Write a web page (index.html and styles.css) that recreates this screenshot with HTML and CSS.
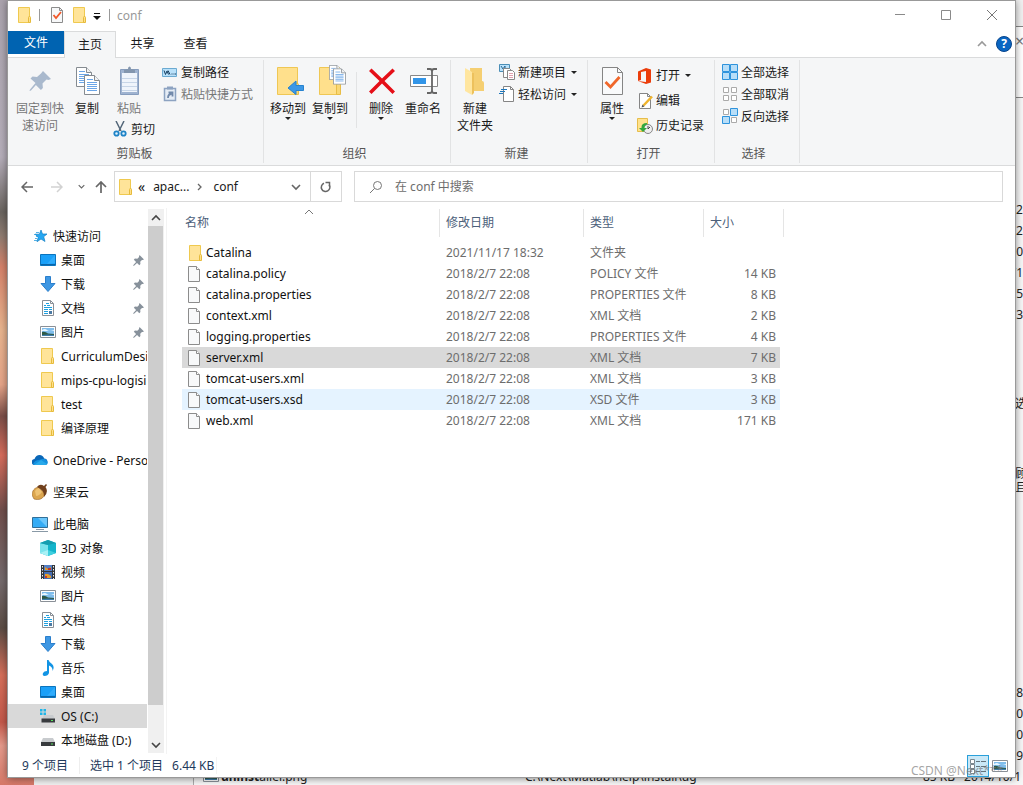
FILE: index.html
```html
<!DOCTYPE html>
<html lang="zh-CN">
<head>
<meta charset="utf-8">
<title>conf</title>
<link rel="stylesheet" href="styles.css">
</head>
<body>
<svg class="sprite" aria-hidden="true">
  <symbol id="folder" viewBox="0 0 16 16"><path d="M1.500.500h11v15h-11z" fill="#ffe499" stroke="#efc94f"/><path d="M11.500 10.500q0-1 1-1t1 1v5h-2z" fill="#ffe08a" stroke="#e6bb3c"/></symbol>
  <symbol id="file" viewBox="0 0 16 16"><path d="M.5.500h8l3 3v12H.5z" fill="#f8f9fa" stroke="#8c8c8c"/><path d="M8.500.500v3h3" fill="#fff" stroke="#8c8c8c"/></symbol>
  <symbol id="check-doc" viewBox="0 0 16 16"><path d="M2.500.500h8l3 3v12h-11z" fill="#f7f8f9" stroke="#8c8c8c"/><path d="M10.500.500v3h3" fill="none" stroke="#8c8c8c"/><path d="M4.500 8l2.500 3 5-6" fill="none" stroke="#f1592a" stroke-width="1.800"/></symbol>
  <symbol id="down" viewBox="0 0 6 3"><path d="M0 0h6L3 3z" fill="currentColor"/></symbol>
  <symbol id="chev-down" viewBox="0 0 10 10"><path d="M1 3l4 4 4-4" fill="none" stroke="currentColor" stroke-width="1.600"/></symbol>
  <symbol id="chev-up" viewBox="0 0 10 10"><path d="M1 7l4-4 4 4" fill="none" stroke="currentColor" stroke-width="1.600"/></symbol>
  <symbol id="pin" viewBox="0 0 16 16"><path d="M9.500 0L16 6.500l-2 .8-1-.1-2.500 2.500.3 3.500-1.600 1.600-3.300-3.300L1.500 15.500l-1.300.300.3-1.300 4-4.400L1.200 6.800l1.600-1.600 3.500.3L8.800 3l-.1-1z" fill="currentColor"/></symbol>
  <symbol id="desktop" viewBox="0 0 16 16"><path d="M.5 2.500h15v11H.5z" fill="#1aa0f8" stroke="#0b74bd"/><path d="M15 3v8L7 12z" fill="#3fb4ff" opacity=".6"/><path d="M1 12.500h14" stroke="#0a65a8"/></symbol>
  <symbol id="download" viewBox="0 0 16 16"><path d="M5.500.500h5v7H15L8 15.500 1 7.500h4.500z" fill="#3e97e3" stroke="#2b7fcc"/></symbol>
  <symbol id="document" viewBox="0 0 16 16"><path d="M2.500.500h8l3 3v12h-11z" fill="#fff" stroke="#8a9097"/><path d="M10.500.500v3h3" fill="none" stroke="#8a9097"/><path d="M6 3.500h3M4 5.500h2M7 5.500h3M4 7.500h8M4 9.500h4M4 11.500h4M9 9.500h3M4 13.500h4" fill="none" stroke="#1ea0e0"/><path d="M9 11h3v3H9z" fill="#4b7aa3"/></symbol>
  <symbol id="picture" viewBox="0 0 16 16"><path d="M.5 2.500h15v11H.5z" fill="#fff" stroke="#8a9097"/><path d="M2 4h12v8H2z" fill="#7fbdec"/><path d="M2 6q3-2 5 0t7 0v1H2z" fill="#e8f6ff"/><path d="M2 8q3-1 6 1.500l6 .5v2H2z" fill="#2e5945"/><path d="M2 11q6-1 12 0v1H2z" fill="#3e7cab"/></symbol>
  <symbol id="star" viewBox="0 0 16 16"><path d="M9 2l1.500 4H15l-3.300 2.700 1.300 4.800L9 11l-4 2.700 1.200-4.500L3 6.200h4.400z" fill="#25a7f2" stroke="#147fc4" stroke-width=".7"/><path d="M4 4.500h3M2 6.500h3M4 8.500h2M3 10.500h2M2 12.500h3" stroke="#299de0" stroke-width=".8"/></symbol>
  <symbol id="cloud" viewBox="0 0 16 16"><path d="M3 13a3 3 0 0 1-.5-6Q4 3 7.500 3q3.500 0 4.700 3.500A3.300 3.300 0 0 1 13 13z" fill="#0a67b8"/><path d="M1 12q2-4 6-4l3-1q4-.8 5 2 2 3-1.500 4H3q-1.400 0-2-1z" fill="#1490df"/><path d="M2 13l7-5 6 4q-.5 1-2 1z" fill="#29a9ea"/></symbol>
  <symbol id="nut" viewBox="0 0 16 16"><path d="M6 3q-6 2-6 8l2 4q7 2 10-3l1-3z" fill="#dba54e" stroke="#9a6528" stroke-width=".6"/><path d="M3 7q1-2 4-3l3 4q-3 4-6 4z" fill="#f6ce83" opacity=".7"/><path d="M5 3q3-4 7-1l2-2 1 1-1.500 2Q17 8 12 13q.5-7-7-10z" fill="#71401c"/></symbol>
  <symbol id="pc" viewBox="0 0 16 16"><path d="M.5 1.500h15v10H.5z" fill="#35acf5" stroke="#316f98"/><path d="M15 2v9L6 2z" fill="#8bd5ff" opacity=".65"/><path d="M4 13.500h8M0 15.500h16" stroke="#8999a6"/></symbol>
  <symbol id="cube" viewBox="0 0 16 16"><path d="M8 0l8 3v10l-8 3-8-3V3z" fill="#14b4cb"/><path d="M0 3l8 2v11l-8-3z" fill="#7be3ec"/><path d="M0 3l8-3 8 3-8 2z" fill="#159daf"/><path d="M0 13l8-3v6z" fill="#a9f1f5"/><path d="M16 13l-8-3v6z" fill="#3fd0df"/></symbol>
  <symbol id="video" viewBox="0 0 16 16"><path d="M1 1h14v14H1z" fill="#33363a"/><path d="M4 1h8v6H4z" fill="#547ec4"/><path d="M4 8h8v7H4z" fill="#456fb5"/><path d="M5 3l3 2 3-2v3H5zM5 10h3l3 2v2H5z" fill="#e49b2a"/><path d="M8 4h3v2H8zM5 12h2v2H5z" fill="#c63826"/><path d="M2.500 2v13M13.500 2v13" stroke="#eee" stroke-dasharray="1.500 1.500"/></symbol>
  <symbol id="music" viewBox="0 0 16 16"><path d="M7 0h1.500q.5 2 3.500 4 3 3 .500 7 .5-4-3.500-5.500V13q-1 3-4.500 3Q2 15.500 3 13q1-2 4-2z" fill="#1294e4"/></symbol>
  <symbol id="disk" viewBox="0 0 16 16"><path d="M3 6h10l2 4H1z" fill="#c8cbce"/><path d="M1 10h14v4H1z" fill="#383b3e"/><path d="M11 12h2" stroke="#57e35f"/></symbol>
  <symbol id="osdisk" viewBox="0 0 16 16"><path d="M0 1h2.500v2.500H0zM3.500 1H6v2.500H3.500zM0 4.500h2.500V7H0zM3.500 4.500H6V7H3.500z" fill="#20b5e8"/><path d="M4 7h9l2 4H2z" fill="#c8cbce"/><path d="M1.500 10.500H15v4H1.500z" fill="#383b3e"/><path d="M11 12.500h2" stroke="#57e35f"/></symbol>
  <symbol id="big-folder" viewBox="0 0 32 32"><path d="M5.500 2.500h20v27h-20z" fill="#ffe08c" stroke="#efc754"/><path d="M22.500 20q0-2 2-2t2 2v9.500h-4z" fill="#f9d774" stroke="#e8bd46"/></symbol>
  <symbol id="sheet" viewBox="0 0 16 20"><path d="M.5.500h10l5 5v14H.5z" fill="#fff" stroke="#858b91"/><path d="M10.500.500v5h5" fill="#f1f2f3" stroke="#858b91"/><path d="M3 4.500h6M3 7.500h10M3 9.500h10M3 11.500h10M3 13.500h10M3 15.500h10" stroke="#6ba6e8"/></symbol>
</svg>

<div class="behind" aria-hidden="true">
  <div class="wallpaper"></div>
  <div class="back-window">
    <div class="back-edge edge-top"><span class="back-x">×</span></div>
    <div class="back-dates upper"><span>7 2</span><span>7 2</span><span>30</span><span>/1</span><span>25</span><span>23</span><span>:4</span></div>
    <div class="back-notes"><span>选</span><span class="note-gap">顾利</span><span>且值</span></div>
    <div class="back-dates lower"><span>8</span><span>00</span><span>00</span><span>29</span></div>
    <div class="back-file"><svg class="i16"><use href="#picture"/></svg><span><b>uninst</b>aller.png</span></div>
    <div class="back-path">C:\Next\Matlab\help\install\ug</div>
    <div class="back-size"><span>85 KB</span><span>2014/10/1</span></div>
  </div>
</div>

<main class="window">
  <header class="titlebar">
    <svg class="i16"><use href="#folder"/></svg>
    <i class="tick"></i>
    <button class="quick" aria-label="属性"><svg class="i16"><use href="#check-doc"/></svg></button>
    <button class="quick" aria-label="新建文件夹"><svg class="i16"><use href="#folder"/></svg></button>
    <button class="customize" aria-label="自定义快速访问工具栏"><svg viewBox="0 0 8 8" width="8" height="8"><path d="M1 1.500h6" stroke="#111"/><path d="M0 4h8L4 8z" fill="#111"/></svg></button>
    <i class="tick"></i>
    <h1 class="title">conf</h1>
    <div class="controls">
      <button aria-label="最小化"><svg viewBox="0 0 10 10" width="10" height="10"><path d="M0 4.500h10" stroke="#8a8a8a"/></svg></button>
      <button aria-label="最大化"><svg viewBox="0 0 10 10" width="10" height="10"><path d="M.5.500h9v9h-9z" fill="none" stroke="#8a8a8a"/></svg></button>
      <button aria-label="关闭"><svg viewBox="0 0 10 10" width="10" height="10"><path d="M0 0l10 10M10 0L0 10" stroke="#777"/></svg></button>
    </div>
  </header>

  <nav class="tabs">
    <button class="tab file-tab">文件</button>
    <button class="tab active">主页</button>
    <button class="tab">共享</button>
    <button class="tab">查看</button>
    <div class="tabs-end">
      <button aria-label="最小化功能区" class="collapse"><svg class="i10"><use href="#chev-up"/></svg></button>
      <button aria-label="帮助" class="help">?</button>
    </div>
  </nav>

  <section class="ribbon">
    <div class="group clipboard">
      <div class="group-body">
        <button class="big wide dim"><svg class="i32" viewBox="0 0 32 32"><path d="M19 6l8 8-2.500 1-2-.4-4 4 .4 4.400-2 2-5-5L7 25.500l-1.500.500.500-1.500 5.500-6.500-5-4.500 2-2 4.500.500 4-3.500z" fill="#a9b9cd"/></svg><span>固定到快<br>速访问</span></button>
        <button class="big narrow"><svg class="i32" viewBox="0 0 32 32"><svg x="5" y="2" width="16" height="20"><use href="#sheet"/></svg><svg x="13" y="10" width="16" height="20"><use href="#sheet"/></svg></svg><span>复制</span></button>
        <div class="paste-col">
          <button class="big paste dim"><svg class="i32" viewBox="0 0 32 32"><path d="M7.500 4.500h18v25h-18z" fill="#9fb3d0" stroke="#869cbd"/><path d="M9 8h15v19H9z" fill="#eff4fb"/><path d="M9 13.500h15M9 17.500h15M9 21.500h15M9 25.500h15" stroke="#c7d5e7"/><path d="M11 8V5l4-1q0-2.500 1.500-2.500T18 4l4 1v3z" fill="#8396ae"/></svg><span>粘贴</span></button>
          <button class="small cut"><svg class="i16" viewBox="0 0 16 16"><path d="M4 0l5 10M12 0L7 10" stroke="#536779" stroke-width="1.500"/><circle cx="4.500" cy="12.500" r="2.200" fill="#dff2ff" stroke="#1e83c6" stroke-width="1.800"/><circle cx="11.500" cy="12.500" r="2.200" fill="#dff2ff" stroke="#1e83c6" stroke-width="1.800"/></svg>剪切</button>
        </div>
        <div class="stack">
          <button class="small"><svg class="i16" viewBox="0 0 16 16"><path d="M.5 4.500h14v8H.5z" fill="#b9e1fa" stroke="#6baad1"/><path d="M2 6.500l1.500 4L5 7l1.500 3.500M6 6.500l2 4M9.500 10h1M11.500 10h1M13 10h1" fill="none" stroke="#153e60"/></svg>复制路径</button>
          <button class="small dim"><svg class="i16" viewBox="0 0 16 16"><path d="M2.500 2.500h11v12h-11z" fill="#e5ecf5" stroke="#8da3c1" stroke-width="1.500"/><path d="M5 .5h6v3H5z" fill="#8da3c1"/><path d="M6 12q0-4 3.500-4M6.500 6.500h4v4" fill="none" stroke="#7189aa" stroke-width="1.800"/></svg>粘贴快捷方式</button>
        </div>
      </div>
      <div class="group-label">剪贴板</div>
    </div>

    <div class="group organize">
      <div class="group-body">
        <button class="big"><svg class="i32" viewBox="0 0 32 32"><use href="#big-folder"/><path d="M31.500 20.500v5H24v4l-8-6.500 8-7v4.500z" fill="#3d98e6" stroke="#2783cf"/></svg><span>移动到</span><svg class="drop"><use href="#down"/></svg></button>
        <button class="big"><svg class="i32" viewBox="0 0 32 32"><use href="#big-folder"/><svg x="15" y="0" width="12" height="15" viewBox="0 0 16 20"><use href="#sheet"/></svg><svg x="19" y="3" width="13" height="17" viewBox="0 0 16 20"><use href="#sheet"/></svg></svg><span>复制到</span><svg class="drop"><use href="#down"/></svg></button>
        <i class="inner-rule"></i>
        <button class="big"><svg class="i32" viewBox="0 0 32 32"><path d="M6.500 3.500L17 13.500 27.500 3.500 30 6 19.500 16 30 26.500 27.500 29 17 18.500 6.500 29 4 26.500 14.500 16 4 6z" fill="#e50f18"/></svg><span>删除</span><svg class="drop"><use href="#down"/></svg></button>
        <button class="big"><svg class="i32" viewBox="0 0 32 32"><path d="M3.500 10.500h27v11h-27z" fill="#fff" stroke="#888"/><path d="M6 13h13v6H6z" fill="#3295e8"/><path d="M20 4h3q2 0 2 2.500v19q0 2.500-2 2.500h-3M30 4h-3q-2 0-2 2.500v19q0 2.500 2 2.500h3" fill="none" stroke="#666" stroke-width="1.800"/></svg><span>重命名</span></button>
      </div>
      <div class="group-label">组织</div>
    </div>

    <div class="group create">
      <div class="group-body">
        <button class="big"><svg class="i32" viewBox="0 0 32 32"><path d="M11 3h12v13q2 0 2 2v8H12z" fill="#f5cf72"/><path d="M6 3l7 4v23l-7-4z" fill="#ffe6a0"/><path d="M13 8h2v20l-2 2z" fill="#edc15c"/></svg><span>新建<br>文件夹</span></button>
        <div class="stack">
          <button class="small"><svg class="i16" viewBox="0 0 16 16"><path d="M.5.500h10v7H.5z" fill="#b9e1fa" stroke="#4a8eb7"/><path d="M2 2l2 3 2-3v3" fill="none" stroke="#286895"/><path d="M4.500 4.500h6l2 2v7h-8z" fill="#fff" stroke="#888"/><path d="M8.500 6.500h5l2 2v7h-7z" fill="#fff" stroke="#888"/><path d="M10 9.500h4M10 11.500h4M10 13.500h4" stroke="#e0a0ae"/></svg>新建项目<svg class="drop"><use href="#down"/></svg></button>
          <button class="small"><svg class="i16" viewBox="0 0 16 16"><path d="M4.500.500h7l3 3v12h-10z" fill="#fff" stroke="#858585"/><path d="M11.500.500v3h3" fill="none" stroke="#858585"/><path d="M2 3.500h6M1 5.500h5M0 7.500h4" stroke="#1e78bd"/></svg>轻松访问<svg class="drop"><use href="#down"/></svg></button>
        </div>
      </div>
      <div class="group-label">新建</div>
    </div>

    <div class="group open">
      <div class="group-body">
        <button class="big"><svg class="i32" viewBox="0 0 32 32"><path d="M6.500 2.500h15l5 5v22h-20z" fill="#f9fafb" stroke="#858585"/><path d="M21.500 2.500v5h5" fill="none" stroke="#858585"/><path d="M9.500 17l5 5 9-10" fill="none" stroke="#f0672b" stroke-width="2.800"/></svg><span>属性</span><svg class="drop"><use href="#down"/></svg></button>
        <div class="stack tall">
          <button class="small"><svg class="i16" viewBox="0 0 16 16"><path d="M1 3.500L9 0l5 1.500v13L9 16l-8-3 8 1V3L4 4v8l-3 1z" fill="#eb3d0b"/></svg>打开<svg class="drop"><use href="#down"/></svg></button>
          <button class="small"><svg class="i16" viewBox="0 0 16 16"><path d="M2.500.500h8l3 3v12h-11z" fill="#fff" stroke="#858585"/><path d="M10.500.500v3h3" fill="none" stroke="#858585"/><path d="M15 3.500l-8.500 9" stroke="#efb42e" stroke-width="2.500"/><path d="M4.500 14.500l1-3 2 2z" fill="#555"/></svg>编辑</button>
          <button class="small"><svg class="i16" viewBox="0 0 16 16"><path d="M.5.500h10v13H.5z" fill="#ffe28d" stroke="#e6bd4b"/><circle cx="11" cy="11" r="4.500" fill="#eee" stroke="#888"/><path d="M11 8v3l2-2" fill="none" stroke="#444"/><path d="M10 5Q4 5 4.500 10H2l4 4 4-4H7.500Q7 7 10 6.500z" fill="#31a83d"/></svg>历史记录</button>
        </div>
      </div>
      <div class="group-label">打开</div>
    </div>

    <div class="group select">
      <div class="group-body">
        <div class="stack">
          <button class="small"><svg class="i16" viewBox="0 0 16 16"><path d="M.5.500h7v7h-7zM8.500.500h7v7h-7zM.5 8.500h7v7h-7zM8.500 8.500h7v7h-7z" fill="#b8def8" stroke="#2e93dc"/></svg>全部选择</button>
          <button class="small"><svg class="i16" viewBox="0 0 16 16"><path d="M1.500 1.500h5v5h-5zM9.500 1.500h5v5h-5zM1.500 9.500h5v5h-5zM9.500 9.500h5v5h-5z" fill="#fff" stroke="#aaa"/></svg>全部取消</button>
          <button class="small"><svg class="i16" viewBox="0 0 16 16"><path d="M1.500 1.500h5v5h-5zM9.500 9.500h5v5h-5z" fill="#fff" stroke="#aaa"/><path d="M8.500.500h7v7h-7zM.5 8.500h7v7h-7z" fill="#b8def8" stroke="#2e93dc"/></svg>反向选择</button>
        </div>
      </div>
      <div class="group-label">选择</div>
    </div>
  </section>

  <div class="navigation">
    <div class="history">
      <button aria-label="后退"><svg viewBox="0 0 12 12" width="12" height="12"><path d="M12 6H1M6 1L1 6l5 5" fill="none" stroke="#666" stroke-width="1.500"/></svg></button>
      <button aria-label="前进"><svg viewBox="0 0 12 12" width="12" height="12"><path d="M0 6h11M6 1l5 5-5 5" fill="none" stroke="#d2d2d2" stroke-width="1.500"/></svg></button>
      <button aria-label="最近浏览的位置" class="recent"><svg viewBox="0 0 10 10" width="7" height="7"><use href="#chev-down"/></svg></button>
      <button aria-label="上移" class="up"><svg viewBox="0 0 12 12" width="12" height="12"><path d="M6 12V1M1 6l5-5 5 5" fill="none" stroke="#666" stroke-width="1.700"/></svg></button>
    </div>
    <div class="address">
      <svg class="i16"><use href="#folder"/></svg>
      <button class="crumb first">«</button>
      <button class="crumb">apac...</button>
      <svg class="crumb-arrow" viewBox="0 0 6 8"><path d="M1 1l3 3-3 3" fill="none" stroke="#666" stroke-width="1.300"/></svg>
      <button class="crumb">conf</button>
      <button class="address-drop" aria-label="以前的位置"><svg class="i10"><use href="#chev-down"/></svg></button>
      <button class="refresh" aria-label="刷新"><svg viewBox="0 0 12 12" width="12" height="12"><path d="M4 2.200A4.300 4.300 0 1 0 9.200 3.800" fill="none" stroke="#666" stroke-width="1.500"/><path d="M5.500 1.500H9.500v4" fill="none" stroke="#666" stroke-width="1.500"/></svg></button>
    </div>
    <label class="search"><svg viewBox="0 0 14 14" width="14" height="14"><circle cx="8.500" cy="5.500" r="4" fill="none" stroke="#777"/><path d="M5.500 8.500L1 13" stroke="#777"/></svg><input type="text" aria-label="搜索" placeholder="在 conf 中搜索"></label>
  </div>

  <div class="content">
    <nav class="tree" aria-label="导航窗格">
      <ul>
        <li><a href="#" class="root"><svg class="i16"><use href="#star"/></svg>快速访问</a></li>
        <li><a href="#"><svg class="i16"><use href="#desktop"/></svg>桌面<svg class="pinned"><use href="#pin"/></svg></a></li>
        <li><a href="#"><svg class="i16"><use href="#download"/></svg>下载<svg class="pinned"><use href="#pin"/></svg></a></li>
        <li><a href="#"><svg class="i16"><use href="#document"/></svg>文档<svg class="pinned"><use href="#pin"/></svg></a></li>
        <li><a href="#"><svg class="i16"><use href="#picture"/></svg>图片<svg class="pinned"><use href="#pin"/></svg></a></li>
        <li><a href="#"><svg class="i16"><use href="#folder"/></svg>CurriculumDesign</a></li>
        <li><a href="#"><svg class="i16"><use href="#folder"/></svg>mips-cpu-logisim</a></li>
        <li><a href="#"><svg class="i16"><use href="#folder"/></svg>test</a></li>
        <li><a href="#"><svg class="i16"><use href="#folder"/></svg>编译原理</a></li>
        <li class="section"><a href="#" class="root"><svg class="i16"><use href="#cloud"/></svg>OneDrive - Personal</a></li>
        <li class="section"><a href="#" class="root"><svg class="i16"><use href="#nut"/></svg>坚果云</a></li>
        <li class="section"><a href="#" class="root"><svg class="i16"><use href="#pc"/></svg>此电脑</a></li>
        <li><a href="#"><svg class="i16"><use href="#cube"/></svg>3D 对象</a></li>
        <li><a href="#"><svg class="i16"><use href="#video"/></svg>视频</a></li>
        <li><a href="#"><svg class="i16"><use href="#picture"/></svg>图片</a></li>
        <li><a href="#"><svg class="i16"><use href="#document"/></svg>文档</a></li>
        <li><a href="#"><svg class="i16"><use href="#download"/></svg>下载</a></li>
        <li><a href="#"><svg class="i16"><use href="#music"/></svg>音乐</a></li>
        <li><a href="#"><svg class="i16"><use href="#desktop"/></svg>桌面</a></li>
        <li><a href="#" class="current"><svg class="i16"><use href="#osdisk"/></svg>OS (C:)</a></li>
        <li><a href="#"><svg class="i16"><use href="#disk"/></svg>本地磁盘 (D:)</a></li>
      </ul>
      <div class="scrollbar">
        <button aria-label="向上滚动"><svg class="i10"><use href="#chev-up"/></svg></button>
        <div class="track"><div class="thumb"></div></div>
        <button aria-label="向下滚动"><svg class="i10"><use href="#chev-down"/></svg></button>
      </div>
    </nav>

    <div class="files">
      <table>
        <colgroup><col class="c-name"><col class="c-date"><col class="c-type"><col class="c-size"></colgroup>
        <thead><tr>
          <th><button>名称</button><svg class="sort i10" viewBox="0 0 10 10"><path d="M1 7l4-4 4 4" fill="none" stroke="#777"/></svg></th>
          <th><button>修改日期</button></th><th><button>类型</button></th><th><button>大小</button></th>
        </tr></thead>
        <tbody>
          <tr><td><svg class="i16"><use href="#folder"/></svg>Catalina</td><td>2021/11/17 18:32</td><td>文件夹</td><td></td></tr>
          <tr><td><svg class="i16"><use href="#file"/></svg>catalina.policy</td><td>2018/2/7 22:08</td><td>POLICY 文件</td><td>14 KB</td></tr>
          <tr><td><svg class="i16"><use href="#file"/></svg>catalina.properties</td><td>2018/2/7 22:08</td><td>PROPERTIES 文件</td><td>8 KB</td></tr>
          <tr><td><svg class="i16"><use href="#file"/></svg>context.xml</td><td>2018/2/7 22:08</td><td>XML 文档</td><td>2 KB</td></tr>
          <tr><td><svg class="i16"><use href="#file"/></svg>logging.properties</td><td>2018/2/7 22:08</td><td>PROPERTIES 文件</td><td>4 KB</td></tr>
          <tr class="selected"><td><svg class="i16"><use href="#file"/></svg>server.xml</td><td>2018/2/7 22:08</td><td>XML 文档</td><td>7 KB</td></tr>
          <tr><td><svg class="i16"><use href="#file"/></svg>tomcat-users.xml</td><td>2018/2/7 22:08</td><td>XML 文档</td><td>3 KB</td></tr>
          <tr class="hovered"><td><svg class="i16"><use href="#file"/></svg>tomcat-users.xsd</td><td>2018/2/7 22:08</td><td>XSD 文件</td><td>3 KB</td></tr>
          <tr><td><svg class="i16"><use href="#file"/></svg>web.xml</td><td>2018/2/7 22:08</td><td>XML 文档</td><td>171 KB</td></tr>
        </tbody>
      </table>
    </div>
  </div>

  <footer class="status">
    <span class="count">9 个项目</span>
    <span>选中 1 个项目</span>
    <span class="bytes">6.44 KB</span>
    <div class="views">
      <button class="view on" aria-label="详细信息"><svg viewBox="0 0 16 16" width="16" height="16"><path d="M.5 1.500h4v4h-4zM.5 6.500h4v4h-4zM.5 11.500h4v4h-4z" fill="#fff" stroke="#7b878e"/><path d="M6 3.500h4M11 3.500h5M6 8.500h4M11 8.500h5M6 13.500h4M11 13.500h5" stroke="#65747d"/></svg></button>
      <button class="view" aria-label="大图标"><svg class="i16"><use href="#picture"/></svg></button>
    </div>
  </footer>
</main>
<div class="watermark">CSDN @Next***</div>
</body>
</html>
```

FILE: styles.css
```css
* { box-sizing: border-box; }

body {
  margin: 0;
  height: 100vh;
  display: flex;
  position: relative;
  overflow: hidden;
  background: #f0f0f0;
  color: #1a1a1a;
  font: 12px/17px "Noto Sans", "Noto Sans CJK SC", sans-serif;
}

button {
  padding: 0;
  border: 0;
  background: none;
  color: inherit;
  font: inherit;
}

svg { display: block; flex: none; }
.sprite { position: absolute; width: 0; height: 0; }
.i10 { width: 10px; height: 10px; }
.i16 { width: 16px; height: 16px; }
.i32 { width: 32px; height: 32px; }
.drop { width: 6px; height: 3px; color: #222; }

/* Desktop and the window underneath */
.behind { position: absolute; inset: 0; overflow: hidden; color: #222; }
.wallpaper {
  position: absolute;
  inset: 0 auto 0 0;
  width: 34px;
  background: linear-gradient(#aaa3ad 0, #b5aeba 20%, #6b6560 27%, #8e7b70 30%, #d5826a 34%, #e8b48e 42%, #e5a488 49%, #7b4f49 53%, #d66c5c 58%, #704f4c 65%, #746a6c 74%, #5c4d45 80%, #d66f5a 86%, #c4584a 92%, #e69b8c 95%, #d67868 100%);
}
.back-window { position: absolute; inset: 26px 0 0 193px; background: #f7f7f7; border-left: 1px solid #aaa; }
.edge-top {
  position: absolute;
  inset: 0 0 auto auto;
  width: 8px;
  height: 72px;
  background: #fff;
  border-top: 1px solid #888;
  border-bottom: 1px solid #888;
}
.back-x { position: absolute; top: 6px; left: 0; font-size: 16px; color: #777; }
.back-dates { position: absolute; right: 0; display: grid; text-align: right; line-height: 21px; }
.upper { top: 173px; height: 132px; overflow: hidden; }
.lower { top: 656px; }
.back-notes { position: absolute; top: 371px; right: 0; display: grid; width: 8px; overflow: hidden; line-height: 14px; white-space: nowrap; }
.note-gap { margin-top: 56px; }
.back-file { position: absolute; left: 9px; bottom: 0; display: flex; gap: 2px; }
.back-path { position: absolute; left: 331px; bottom: 0; }
.back-size { position: absolute; right: 2px; bottom: 0; display: flex; gap: 9px; }

/* Explorer window */
.window {
  position: relative;
  flex: 1;
  min-width: 0;
  margin: 0 8px 8px;
  display: flex;
  flex-direction: column;
  background: #fff;
  border-top: 1px solid #999;
  box-shadow: 0 0 0 1px #999, 0 1px 8px #0008;
}

.titlebar { display: flex; align-items: center; height: 30px; padding: 0 0 2px 9px; }
.tick { width: 1px; height: 12px; margin-left: 6px; background: #999; }
.titlebar .quick { margin-left: 9px; }
.quick + .quick { margin-left: 7px; }
.titlebar .customize { margin-left: 5px; padding-top: 2px; }
.customize + .tick { margin-left: 8px; }
.title { margin: 0 0 0 7px; font-size: 12px; font-weight: 400; color: #999; }
.controls { display: flex; margin-left: auto; align-self: stretch; }
.controls button { width: 46px; display: grid; place-items: center; }

.tabs { display: flex; height: 27px; border-bottom: 1px solid #dadbdc; }
.tab { width: 53px; height: 24px; }
.file-tab { width: 56px; height: 23px; background: #0063b1; color: #fff; }
.tab.active { width: 52px; height: 27px; padding-bottom: 2px; background: #f5f6f7; border: 1px solid #dadbdc; border-bottom: 0; }
.tabs-end { margin-left: auto; padding-right: 3px; display: flex; align-items: center; gap: 9px; }
.collapse { color: #999; }
.help { width: 16px; height: 16px; border-radius: 50%; background: #0a66c2; border: 1px solid #08458c; color: #fff; font-weight: 700; line-height: 14px; }

/* Ribbon */
.ribbon { display: flex; height: 108px; padding: 2px 0; background: #f5f6f7; border-bottom: 1px solid #dadbdc; }
.group { display: flex; flex-direction: column; justify-content: space-between; border-right: 1px solid #e2e3e4; padding-left: 3px; }
.group-body { display: flex; align-items: flex-start; }
.group-label { padding: 0 8px 1px 0; text-align: center; color: #555; }
.clipboard { width: 256px; padding-left: 4px; }
.clipboard .group-label { padding-right: 6px; }
.organize { width: 187px; }
.create { width: 137px; }
.open { width: 127px; }
.select { width: 85px; padding-left: 7px; }
.select .group-label { padding-right: 14px; }
.big { width: 42px; padding-top: 5px; display: flex; flex-direction: column; align-items: center; white-space: nowrap; }
.big span { margin-top: 3px; }
.wide { width: 56px; }
.narrow { width: 38px; }
.paste { width: 46px; }
.paste-col { width: 56px; }
.dim { color: #777; }
.small { display: flex; align-items: center; gap: 3px; height: 22px; white-space: nowrap; }
.small .drop { margin-left: 2px; }
.cut { height: 24px; padding-left: 6px; }
.stack { display: grid; padding-top: 1px; }
.stack.tall { padding-top: 3px; }
.tall .small { height: 25px; }
.create .stack { margin-left: 3px; }
.open .stack { margin-left: 4px; }
.inner-rule { width: 1px; height: 56px; margin: 12px 3px 0 5px; background: #e2e3e4; }

/* Address row */
.navigation { display: flex; align-items: center; height: 42px; padding: 0 12px 1px 13px; }
.history { display: flex; align-items: center; width: 93px; }
.history button { display: grid; place-items: center; width: 12px; height: 24px; }
.history button + button { margin-left: 18px; }
.history .recent { margin-left: 12px; color: #666; }
.history button.up { margin-left: 8px; }
.address { display: flex; align-items: center; width: 228px; height: 31px; padding-left: 3px; border: 1px solid #d9d9d9; }
.crumb { margin-left: 10px; }
.crumb.first { margin-left: 4px; font-size: 14px; }
.crumb.first + .crumb { margin-left: 8px; }
.crumb-arrow { width: 6px; height: 8px; margin: 0 0 0 8px; }
.address-drop { margin-left: auto; margin-right: 9px; color: #666; }
.refresh { width: 31px; align-self: stretch; display: grid; place-items: center; border-left: 1px solid #d9d9d9; }
.search { flex: 1; display: flex; align-items: center; gap: 12px; height: 31px; margin-left: 12px; padding-left: 14px; border: 1px solid #d9d9d9; }
.search input { flex: 1; min-width: 0; padding: 0; border: 0; outline: 0; background: none; font: inherit; }
.search input::placeholder { color: #6d6d6d; opacity: 1; }

/* Navigation tree */
.content { flex: 1; min-height: 0; display: flex; }
.tree { width: 159px; display: flex; border-right: 1px solid #f3f3f3; }
.tree ul { width: 139px; margin: 0; padding: 16px 0 0; list-style: none; overflow: hidden; }
.tree a { display: flex; align-items: center; gap: 5px; height: 24px; padding-left: 32px; color: #111; text-decoration: none; white-space: nowrap; }
.tree a.root { padding-left: 24px; }
.tree a.current { background: #d9d9d9; }
.section { margin-top: 8px; }
.pinned { width: 11px; height: 11px; margin: 0 3px 0 auto; color: #87919b; }
.scrollbar { display: flex; flex-direction: column; width: 16px; margin: 1px 0 1px 1px; background: #f0f0f0; }
.scrollbar button { height: 17px; display: grid; place-items: center; color: #444; }
.track { flex: 1; }
.thumb { width: 15px; height: 94%; background: #cdcdcd; }

/* File list */
.files { flex: 1; padding: 1px 0 0 15px; overflow: hidden; }
table { width: 602px; table-layout: fixed; border-spacing: 0; }
.c-name { width: 258px; }
.c-date { width: 144px; }
.c-type { width: 120px; }
.c-size { width: 80px; }
th { position: relative; padding: 0 0 5px; font-weight: 400; }
th button { display: block; width: 100%; height: 28px; padding: 0 0 2px 6px; text-align: left; color: #4c607a; border-right: 1px solid #e5e5e5; }
th:first-child button { padding-left: 3px; }
.sort { position: absolute; top: -2px; left: 122px; }
td { height: 21px; padding: 0 0 0 6px; color: #6d6d6d; white-space: nowrap; }
td:first-child { display: flex; align-items: center; gap: 2px; color: #111; }
td:last-child { padding-right: 4px; text-align: right; border-right: 4px solid transparent; background-clip: padding-box; }
.selected td { background-color: #d9d9d9; }
.hovered td { background-color: #e5f3ff; }

/* Status bar */
.status { display: flex; align-items: center; height: 23px; padding: 0 4px 0 14px; color: #1e395b; }
.status span { margin-right: 9px; }
.status .count { margin-right: 10px; padding-right: 11px; border-right: 1px solid #eee; }
.status .bytes { padding-right: 2px; border-right: 1px solid #f3f3f3; }
.views { display: flex; margin-left: auto; }
.view { width: 22px; height: 22px; display: grid; place-items: center; }
.view.on { border: 1px solid #2aa0da; background: #c9e8f7; }

.watermark { position: absolute; right: 20px; bottom: 6px; color: #777a; }
```
